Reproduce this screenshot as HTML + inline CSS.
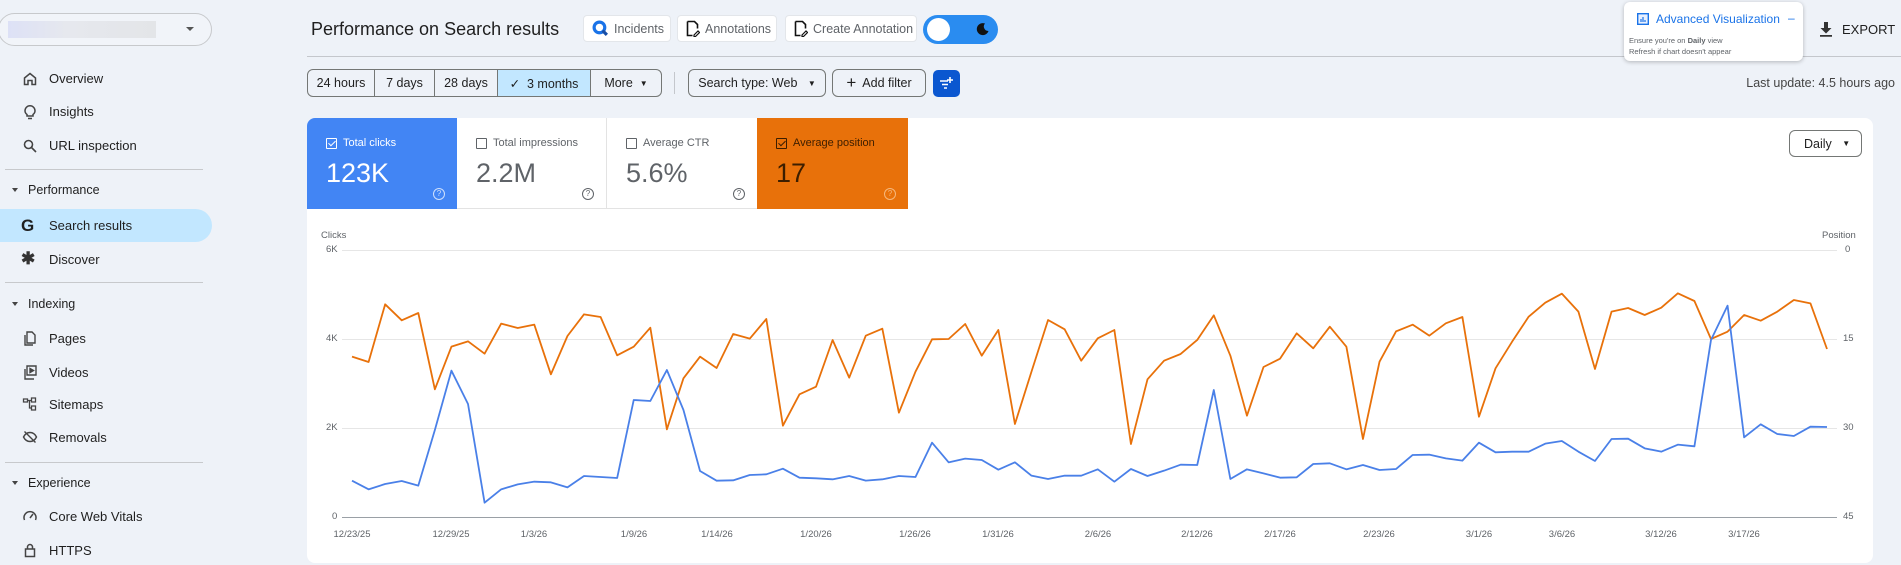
<!DOCTYPE html>
<html><head><meta charset="utf-8">
<style>
*{box-sizing:border-box;margin:0;padding:0}
body{width:1901px;height:565px;overflow:hidden;background:#eef2f8;font-family:"Liberation Sans",sans-serif;color:#1f1f1f;position:relative}
.a{position:absolute;white-space:nowrap}
.nav{position:absolute;left:49px;font-size:13px;color:#1f1f1f}
.ico{position:absolute;left:22px;width:16px;height:16px}
.sec{position:absolute;left:28px;font-size:12.5px;color:#1f1f1f}
.sec:before{content:"";position:absolute;left:-16px;top:5px;border:3.5px solid transparent;border-top:4px solid #444}
.div{position:absolute;left:5px;width:198px;height:1px;background:#c7c9cc}
.btn{position:absolute;top:15px;height:27px;background:#fff;border:1px solid #e3e6ea;border-radius:4px;font-size:12.5px;color:#5f6368;display:flex;align-items:center;padding-left:8px;gap:5px;white-space:nowrap;overflow:hidden}
.seg{position:absolute;top:69px;height:28px;border:1px solid #747775;border-radius:6px;font-size:12.5px;color:#1f1f1f;display:flex;align-items:center;justify-content:center;white-space:nowrap}
.tile{position:absolute;top:118px;height:91px;width:150px}
.tl{position:absolute;left:19px;top:19px;font-size:11px;display:flex;align-items:center;gap:6px;white-space:nowrap}
.cb{width:11px;height:11px;border:1.3px solid currentColor;border-radius:1px;position:relative}
.cb.on:after{content:"";position:absolute;left:2.5px;top:0px;width:3px;height:6px;border:solid currentColor;border-width:0 1.4px 1.4px 0;transform:rotate(45deg)}
.tv{position:absolute;left:19px;top:40px;font-size:27px}
.hq{position:absolute;right:12px;top:70px;width:12px;height:12px;border:1px solid currentColor;border-radius:50%;font-size:8px;text-align:center;line-height:10px}
.yl{position:absolute;font-size:9.5px;color:#5f6368}
.dl{position:absolute;top:529px;font-size:9.5px;color:#5f6368;transform:translateX(-50%);white-space:nowrap}
</style></head><body>

<!-- sidebar -->
<div class="a" style="left:-2px;top:13px;width:214px;height:33px;border:1px solid #c7c9cc;border-radius:17px;background:#f1f4f9"></div>
<div class="a" style="left:8px;top:21px;width:148px;height:17px;background:linear-gradient(90deg,#dde1f6,#e6e8ee 40%,#e3e5e8)"></div>
<div class="a" style="left:186px;top:27px;border:4px solid transparent;border-top:4px solid #555"></div>

<svg class="ico" style="top:71px" viewBox="0 0 16 16" fill="none" stroke="#444" stroke-width="1.5"><path d="M2.5 7L8 2.5 13.5 7V13.5H10V9.5H6V13.5H2.5Z"/></svg>
<div class="nav" style="top:71px">Overview</div>
<svg class="ico" style="top:104px" viewBox="0 0 16 16" fill="none" stroke="#444" stroke-width="1.5"><path d="M5 10.5C3.5 9.5 3 8 3 6.8a5 5 0 0 1 10 0c0 1.2-.5 2.7-2 3.7V12H5Z M6 14.5H10"/></svg>
<div class="nav" style="top:104px">Insights</div>
<svg class="ico" style="top:138px" viewBox="0 0 16 16" fill="none" stroke="#444" stroke-width="1.6"><circle cx="6.5" cy="6.5" r="4"/><path d="M9.5 9.5L14 14"/></svg>
<div class="nav" style="top:138px">URL inspection</div>
<div class="div" style="top:169px"></div>
<div class="sec" style="top:183px">Performance</div>
<div class="a" style="left:0;top:209px;width:212px;height:33px;background:#c2e7ff;border-radius:0 17px 17px 0"></div>
<div class="a" style="left:21px;top:216px;font-size:17px;font-weight:bold;color:#1f1f1f">G</div>
<div class="nav" style="top:218px">Search results</div>
<div class="a" style="left:21px;top:249px;font-size:17px;font-weight:bold;color:#333">✱</div>
<div class="nav" style="top:252px">Discover</div>
<div class="div" style="top:282px"></div>
<div class="sec" style="top:297px">Indexing</div>
<svg class="ico" style="top:330px" viewBox="0 0 16 16" fill="none" stroke="#444" stroke-width="1.4"><path d="M5 2h5l3 3v8H5Z M3 5v10h8"/></svg>
<div class="nav" style="top:331px">Pages</div>
<svg class="ico" style="top:364px" viewBox="0 0 16 16" fill="none" stroke="#444" stroke-width="1.4"><path d="M5 2h9v9H5Z M3 5v10h9"/><path d="M8 4.5l3.5 2-3.5 2Z" fill="#444"/></svg>
<div class="nav" style="top:365px">Videos</div>
<svg class="ico" style="top:396px" viewBox="0 0 16 16" fill="none" stroke="#444" stroke-width="1.3"><path d="M1.5 3h4v3h-4Z M9.5 2h4v4h-4Z M9.5 10h4v4h-4Z M5.5 4.5h4 M7.5 4.5v7.5h2"/></svg>
<div class="nav" style="top:397px">Sitemaps</div>
<svg class="ico" style="top:429px" viewBox="0 0 16 16" fill="none" stroke="#444" stroke-width="1.4"><path d="M1.5 8C3 5 5.5 3.5 8 3.5S13 5 14.5 8C13 11 10.5 12.5 8 12.5S3 11 1.5 8Z M2.5 2.5L13.5 13.5"/></svg>
<div class="nav" style="top:430px">Removals</div>
<div class="div" style="top:462px"></div>
<div class="sec" style="top:476px">Experience</div>
<svg class="ico" style="top:508px" viewBox="0 0 16 16" fill="none" stroke="#444" stroke-width="1.5"><path d="M2.5 12A6 6 0 1 1 13.5 12 M8 10L11 6"/></svg>
<div class="nav" style="top:509px">Core Web Vitals</div>
<svg class="ico" style="top:542px" viewBox="0 0 16 16" fill="none" stroke="#444" stroke-width="1.5"><path d="M3.5 7h9v7.5h-9Z M5.5 7V5a2.5 2.5 0 0 1 5 0v2"/></svg>
<div class="nav" style="top:543px">HTTPS</div>

<!-- header -->
<div class="a" style="left:311px;top:19px;font-size:18px;color:#1f1f1f">Performance on Search results</div>
<div class="btn" style="left:583px;width:88px"><svg width="17" height="17" viewBox="0 0 16 16"><circle cx="7" cy="7" r="5" fill="none" stroke="#1a73e8" stroke-width="3"/><path d="M10 10l4 4" stroke="#174ea6" stroke-width="3"/></svg>Incidents</div>
<div class="btn" style="left:677px;width:100px"><svg width="14" height="17" viewBox="0 0 14 17" fill="none" stroke="#111" stroke-width="1.6"><path d="M1.5 1.5h7l3 3v4 M1.5 1.5v14h5"/><path d="M8 15l4-4 1.5 1.5-4 4H8Z" stroke-width="1.2"/></svg>Annotations</div>
<div class="btn" style="left:785px;width:132px"><svg width="14" height="17" viewBox="0 0 14 17" fill="none" stroke="#111" stroke-width="1.6"><path d="M1.5 1.5h7l3 3v4 M1.5 1.5v14h5"/><path d="M8 15l4-4 1.5 1.5-4 4H8Z" stroke-width="1.2"/></svg>Create Annotation</div>
<div class="a" style="left:923px;top:15px;width:75px;height:29px;border-radius:15px;background:#2a8cf0"></div>
<div class="a" style="left:927px;top:18px;width:23px;height:23px;border-radius:50%;background:#fff"></div>
<svg class="a" style="left:976px;top:22px" width="14" height="14" viewBox="0 0 14 14"><path d="M9 1.5A6 6 0 1 0 12.5 9 4.5 4.5 0 0 1 9 1.5Z" fill="#111"/></svg>
<div class="a" style="left:307px;top:56px;width:1594px;height:1px;background:#c4c7cc"></div>

<!-- popup -->
<div class="a" style="left:1624px;top:2px;width:179px;height:59px;background:#fff;border-radius:6px;box-shadow:0 1px 4px rgba(0,0,0,.25)"></div>
<svg class="a" style="left:1637px;top:13px" width="12" height="12" viewBox="0 0 12 12"><rect x="0.7" y="0.7" width="10.6" height="10.6" fill="#e8f0fe" stroke="#1a73e8" stroke-width="1.4"/><path d="M4 9V6 M6 9V4 M8 9V7" stroke="#1a73e8" stroke-width="1.2"/></svg>
<div class="a" style="left:1656px;top:12px;font-size:12px;color:#1a73e8">Advanced Visualization</div>
<div class="a" style="left:1788px;top:11px;font-size:12px;color:#1a73e8">–</div>
<div class="a" style="left:1629px;top:36px;font-size:7.5px;color:#5f6368">Ensure you're on <b>Daily</b> view</div>
<div class="a" style="left:1629px;top:47px;font-size:7.5px;color:#5f6368">Refresh if chart doesn't appear</div>
<svg class="a" style="left:1819px;top:21px" width="14" height="16" viewBox="0 0 14 16"><path d="M5 1h4v6h3.5L7 12.5 1.5 7H5Z M1 14h12v1.8H1Z" fill="#333"/></svg>
<div class="a" style="left:1842px;top:22px;font-size:13px;color:#1f1f1f">EXPORT</div>

<!-- filter row -->
<div class="seg" style="left:307px;width:355px;justify-content:flex-start;overflow:hidden">
 <div style="width:67px;height:100%;display:flex;align-items:center;justify-content:center;border-right:1px solid #747775">24 hours</div>
 <div style="width:60px;height:100%;display:flex;align-items:center;justify-content:center;border-right:1px solid #747775">7 days</div>
 <div style="width:63px;height:100%;display:flex;align-items:center;justify-content:center;border-right:1px solid #747775">28 days</div>
 <div style="width:93px;height:100%;display:flex;align-items:center;justify-content:center;border-right:1px solid #747775;background:#c2e7ff">✓&nbsp; 3 months</div>
 <div style="flex:1;height:100%;display:flex;align-items:center;justify-content:center">More &nbsp;<span style="font-size:8px">▼</span></div>
</div>
<div class="a" style="left:674px;top:72px;width:1px;height:22px;background:#c4c7cc"></div>
<div class="seg" style="left:688px;width:138px">Search type: Web &nbsp;&nbsp;<span style="font-size:8px">▼</span></div>
<div class="seg" style="left:832px;width:94px"><span style="font-size:17px;margin-right:6px">+</span>Add filter</div>
<div class="a" style="left:933px;top:70px;width:27px;height:27px;border-radius:5px;background:#0b57d0"></div>
<svg class="a" style="left:939px;top:76px" width="15" height="15" viewBox="0 0 15 15" stroke="#fff" stroke-width="1.6"><path d="M1 5h8 M3 8.5h6 M5 12h3 M11 1v6 M8 4h6"/></svg>
<div class="a" style="right:6px;top:76px;font-size:12.5px;color:#444">Last update: 4.5 hours ago</div>

<!-- card -->
<div class="a" style="left:307px;top:118px;width:1566px;height:445px;background:#fff;border-radius:8px"></div>
<div class="tile" style="left:307px;background:#4285f4;color:#fff;border-radius:8px 0 0 0"><div class="tl"><div class="cb on"></div>Total clicks</div><div class="tv">123K</div><div class="hq" style="color:#cfe0fc">?</div></div>
<div class="tile" style="left:457px;color:#5f6368;border-right:1px solid #e3e3e3;border-bottom:1px solid #e3e3e3"><div class="tl"><div class="cb"></div>Total impressions</div><div class="tv">2.2M</div><div class="hq">?</div></div>
<div class="tile" style="left:607px;color:#5f6368;border-bottom:1px solid #e3e3e3"><div class="tl"><div class="cb"></div>Average CTR</div><div class="tv">5.6%</div><div class="hq">?</div></div>
<div class="tile" style="left:757px;width:151px;background:#e8710a;color:#3c1e00"><div class="tl"><div class="cb on"></div>Average position</div><div class="tv">17</div><div class="hq" style="color:#f6b87c">?</div></div>
<div class="a" style="left:1789px;top:130px;width:73px;height:27px;border:1px solid #747775;border-radius:6px;font-size:12.5px;display:flex;align-items:center;padding-left:14px">Daily&nbsp;&nbsp;&nbsp;<span style="font-size:8px">▼</span></div>

<!-- chart -->
<div class="yl" style="left:321px;top:230px">Clicks</div>
<div class="yl" style="left:1822px;top:230px">Position</div>
<div class="yl" style="left:326px;top:244px">6K</div>
<div class="yl" style="left:326px;top:333px">4K</div>
<div class="yl" style="left:326px;top:422px">2K</div>
<div class="yl" style="left:332px;top:511px">0</div>
<div class="yl" style="left:1845px;top:244px">0</div>
<div class="yl" style="left:1843px;top:333px">15</div>
<div class="yl" style="left:1843px;top:422px">30</div>
<div class="yl" style="left:1843px;top:511px">45</div>
<svg class="a" style="left:0;top:0" width="1901" height="565">
<g stroke="#e6e6e6" stroke-width="1"><path d="M342 250.5H1837M342 339.5H1837M342 428.5H1837"/></g>
<path d="M342 517.5H1837" stroke="#9aa0a6" stroke-width="1"/>
<g transform="translate(352,240) scale(16.573,0.33333)" fill="none" stroke-width="1.8" stroke-linejoin="round">
<polyline vector-effect="non-scaling-stroke" stroke="#e8710a" points="0,350 1,366 2,193 3,241 4,219 5,448 6,320 7,304 8,341 9,251 10,264 11,254 12,403 13,288 14,223 15,231 16,346 17,320 18,263 19,568 20,415 21,350 22,384 23,282 24,296 25,237 26,557 27,463 28,440 29,300 30,413 31,287 32,266 33,518 34,395 35,298 36,297 37,252 38,347 39,270 40,552 41,395 42,240 43,268 44,362 45,295 46,270 47,612 48,418 49,362 50,342 51,300 52,226 53,347 54,527 55,381 56,356 57,280 58,325 59,260 60,320 61,597 62,365 63,274 64,254 65,287 66,250 67,231 68,530 69,385 70,305 71,230 72,188 73,161 74,215 75,387 76,215 77,204 78,225 79,203 80,160 81,183 82,297 83,275 84,225 85,242 86,215 87,180 88,190 89,327"/>
<polyline vector-effect="non-scaling-stroke" stroke="#4a80e8" points="0,722 1,748 2,732 3,723 4,737 5,570 6,392 7,492 8,788 9,748 10,733 11,725 12,727 13,742 14,708 15,711 16,714 17,480 18,483 19,390 20,510 21,693 22,722 23,721 24,705 25,703 26,686 27,713 28,715 29,718 30,708 31,722 32,718 33,708 34,711 35,608 36,667 37,656 38,660 39,689 40,667 41,707 42,717 43,707 44,707 45,688 46,725 47,687 48,708 49,692 50,674 51,675 52,450 53,717 54,688 55,700 56,713 57,712 58,672 59,670 60,688 61,675 62,690 63,687 64,645 65,644 66,655 67,662 68,608 69,637 70,635 71,635 72,611 73,603 74,635 75,663 76,597 77,596 78,625 79,635 80,614 81,619 82,300 83,197 84,592 85,553 86,582 87,588 88,560 89,561"/>
</g>
</svg>
<div class="dl" style="left:352px">12/23/25</div>
<div class="dl" style="left:451px">12/29/25</div>
<div class="dl" style="left:534px">1/3/26</div>
<div class="dl" style="left:634px">1/9/26</div>
<div class="dl" style="left:717px">1/14/26</div>
<div class="dl" style="left:816px">1/20/26</div>
<div class="dl" style="left:915px">1/26/26</div>
<div class="dl" style="left:998px">1/31/26</div>
<div class="dl" style="left:1098px">2/6/26</div>
<div class="dl" style="left:1197px">2/12/26</div>
<div class="dl" style="left:1280px">2/17/26</div>
<div class="dl" style="left:1379px">2/23/26</div>
<div class="dl" style="left:1479px">3/1/26</div>
<div class="dl" style="left:1562px">3/6/26</div>
<div class="dl" style="left:1661px">3/12/26</div>
<div class="dl" style="left:1744px">3/17/26</div>
</body></html>
